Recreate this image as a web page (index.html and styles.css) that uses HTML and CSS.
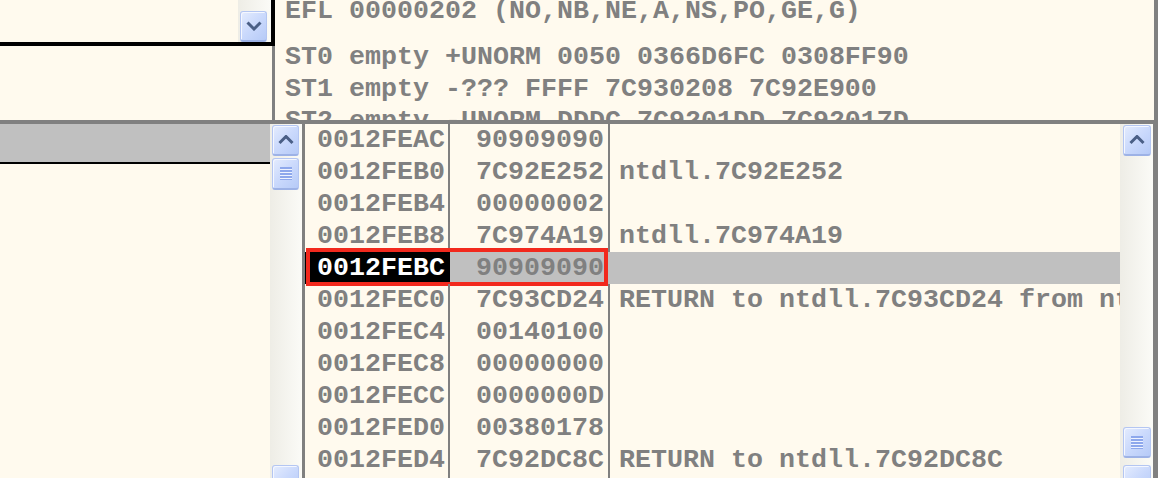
FILE: index.html
```html
<!DOCTYPE html>
<html>
<head>
<meta charset="utf-8">
<link rel="stylesheet" href="styles.css">
</head>
<body>
<div class="screen">
  <div class="top">
    <div class="top-left">
      <div class="disasm">
        <div class="disasm-body"></div>
        <div class="vtrack vtrack-top">
          <div class="sbtn sbtn-down-top">
            <svg width="16" height="10" viewBox="0 0 16 10"><polyline points="1.5,1.5 8,8 14.5,1.5" fill="none" stroke="#4a5f86" stroke-width="3"/></svg>
          </div>
        </div>
      </div>
      <div class="top-left-rest"></div>
    </div>
    <div class="regs">
      <div class="reg-line reg-first">EFL 00000202 (NO,NB,NE,A,NS,PO,GE,G)</div>
      <div class="reg-line reg-group">ST0 empty +UNORM 0050 0366D6FC 0308FF90</div>
      <div class="reg-line">ST1 empty -??? FFFF 7C930208 7C92E900</div>
      <div class="reg-line">ST2 empty -UNORM DDDC 7C9201DD 7C92017D</div>
    </div>
  </div>
  <div class="hsplit"></div>
  <div class="bottom">
    <div class="dump">
      <div class="dump-sel"></div>
    </div>
    <div class="vtrack vtrack-left">
      <div class="sbtn sbtn-up">
        <svg width="16" height="10" viewBox="0 0 16 10"><polyline points="1.5,8 8,1.5 14.5,8" fill="none" stroke="#4a5f86" stroke-width="3"/></svg>
      </div>
      <div class="sthumb sthumb-left"><span class="grip"></span></div>
      <div class="vspacer"></div>
      <div class="sbtn sbtn-down"></div>
    </div>
    <div class="pane-border"></div>
    <div class="stack">
      <div class="row"><div class="c-addr">0012FEAC</div><div class="c-val">90909090</div><div class="c-com"></div></div>
      <div class="row"><div class="c-addr">0012FEB0</div><div class="c-val">7C92E252</div><div class="c-com">ntdll.7C92E252</div></div>
      <div class="row"><div class="c-addr">0012FEB4</div><div class="c-val">00000002</div><div class="c-com"></div></div>
      <div class="row"><div class="c-addr">0012FEB8</div><div class="c-val">7C974A19</div><div class="c-com">ntdll.7C974A19</div></div>
      <div class="row row-sel"><div class="c-addr">0012FEBC</div><div class="c-val">90909090</div><div class="c-com"></div><div class="sel-frame"></div></div>
      <div class="row"><div class="c-addr">0012FEC0</div><div class="c-val">7C93CD24</div><div class="c-com">RETURN to ntdll.7C93CD24 from ntdll.7C92DC8C</div></div>
      <div class="row"><div class="c-addr">0012FEC4</div><div class="c-val">00140100</div><div class="c-com"></div></div>
      <div class="row"><div class="c-addr">0012FEC8</div><div class="c-val">00000000</div><div class="c-com"></div></div>
      <div class="row"><div class="c-addr">0012FECC</div><div class="c-val">0000000D</div><div class="c-com"></div></div>
      <div class="row"><div class="c-addr">0012FED0</div><div class="c-val">00380178</div><div class="c-com"></div></div>
      <div class="row"><div class="c-addr">0012FED4</div><div class="c-val">7C92DC8C</div><div class="c-com">RETURN to ntdll.7C92DC8C</div></div>
      <div class="row"><div class="c-addr">0012FED8</div><div class="c-val">00000000</div><div class="c-com"></div></div>
    </div>
    <div class="vtrack vtrack-right">
      <div class="sbtn sbtn-up">
        <svg width="16" height="10" viewBox="0 0 16 10"><polyline points="1.5,8 8,1.5 14.5,8" fill="none" stroke="#4a5f86" stroke-width="3"/></svg>
      </div>
      <div class="vspacer"></div>
      <div class="sthumb sthumb-right"><span class="grip"></span></div>
      <div class="sbtn sbtn-down sbtn-down-right"></div>
    </div>
    <div class="pane-border-right"></div>
  </div>
</div>
</body>
</html>
```

FILE: styles.css
```css
html, body {
  margin: 0;
  padding: 0;
}
body {
  background: #fffaee;
  overflow: hidden;
  width: 1158px;
  height: 478px;
}
.screen {
  width: 1158px;
  height: 478px;
  overflow: hidden;
  font-family: "Liberation Mono", "DejaVu Sans Mono", monospace;
  font-size: 26.6667px;
  font-weight: bold;
  color: #808080;
  display: flex;
  flex-direction: column;
}

/* ---------- top area ---------- */
.top {
  height: 120px;
  display: flex;
  flex-shrink: 0;
}
.top-left {
  width: 275px;
  display: flex;
  flex-direction: column;
  flex-shrink: 0;
}
.disasm {
  height: 46px;
  box-sizing: border-box;
  border-bottom: 4px solid #000;
  border-right: 4px solid #000;
  display: flex;
  background: #fffaee;
  flex-shrink: 0;
}
.disasm-body {
  flex: 1;
}
.top-left-rest {
  flex: 1;
  box-sizing: border-box;
  border-right: 3px solid #808080;
}
.regs {
  flex: 1;
  box-sizing: border-box;
  border-right: 4px solid #808080;
  padding-left: 10px;
  overflow: hidden;
}
.reg-line {
  height: 32px;
  line-height: 32px;
  white-space: pre;
}
.reg-first {
  margin-top: -5px;
}
.reg-group {
  margin-top: 14px;
}

.hsplit {
  height: 4px;
  background: #808080;
  flex-shrink: 0;
}

/* ---------- bottom area ---------- */
.bottom {
  height: 371px;
  display: flex;
  flex-shrink: 0;
}
.dump {
  width: 270px;
  flex-shrink: 0;
}
.dump-sel {
  height: 38px;
  background: #c0c0c0;
  border-bottom: 2px solid #000;
}

/* scrollbars */
.vtrack {
  background: linear-gradient(to right, #eeede6, #fbfbf7);
  display: flex;
  flex-direction: column;
  flex-shrink: 0;
  box-sizing: border-box;
}
.vtrack-top {
  width: 33px;
  height: 42px;
  padding: 11px 4px 0 2px;
}
.vtrack-left {
  width: 32px;
  padding: 1px 3px 0 2px;
}
.vtrack-right {
  width: 33px;
  padding: 1px 2px 0 3px;
}
.vspacer {
  flex: 1;
}
.sbtn,
.sthumb {
  box-sizing: border-box;
  border: 1px solid #b4c6f2;
  border-bottom: 2px solid #9db2e6;
  border-radius: 3px;
  background: linear-gradient(135deg, #e4ecfe 0%, #cad9fc 50%, #b6caf7 100%);
  box-shadow: inset 1px 1px 0 #f4f7ff;
  display: flex;
  align-items: center;
  justify-content: center;
  flex-shrink: 0;
}
.sbtn {
  height: 30px;
}
.sbtn-down-top {
  height: 31px;
}
.sbtn-up {
  height: 31px;
}
.sbtn-down {
  margin-top: 8px;
}
.sthumb {
  height: 32px;
  margin-top: 2px;
}
.sthumb-right {
  margin-top: 0;
  height: 31px;
}
.grip {
  width: 12px;
  height: 13px;
  background: repeating-linear-gradient(to bottom, #8ea8ec 0, #8ea8ec 2px, #eef3ff 2px, #eef3ff 3px);
}
.sbtn-down-right {
  margin-top: 7px;
}

.pane-border {
  width: 3px;
  background: #808080;
  flex-shrink: 0;
}
.pane-border-right {
  width: 5px;
  background: #808080;
  flex-shrink: 0;
}

/* stack pane */
.stack {
  flex: 1;
  overflow: hidden;
}
.row {
  position: relative;
  display: flex;
  height: 32px;
  line-height: 32px;
  white-space: pre;
}
.c-addr {
  width: 145px;
  box-sizing: border-box;
  padding-left: 12px;
  border-right: 2px solid #808080;
  flex-shrink: 0;
}
.c-val {
  width: 160px;
  box-sizing: border-box;
  padding-right: 4px;
  text-align: right;
  border-right: 2px solid #808080;
  flex-shrink: 0;
}
.c-com {
  flex: 1;
  padding-left: 9px;
  overflow: hidden;
}
.row-sel {
  background: #c0c0c0;
}
.row-sel .c-addr {
  background: #000;
  color: #fff;
  border-right-color: #000;
}
.row-sel .c-val {
  border-right-color: #c0c0c0;
}
.sel-frame {
  position: absolute;
  left: 1px;
  top: -4px;
  width: 302px;
  height: 38px;
  box-sizing: border-box;
  border: 4px solid #f2291d;
}
```
